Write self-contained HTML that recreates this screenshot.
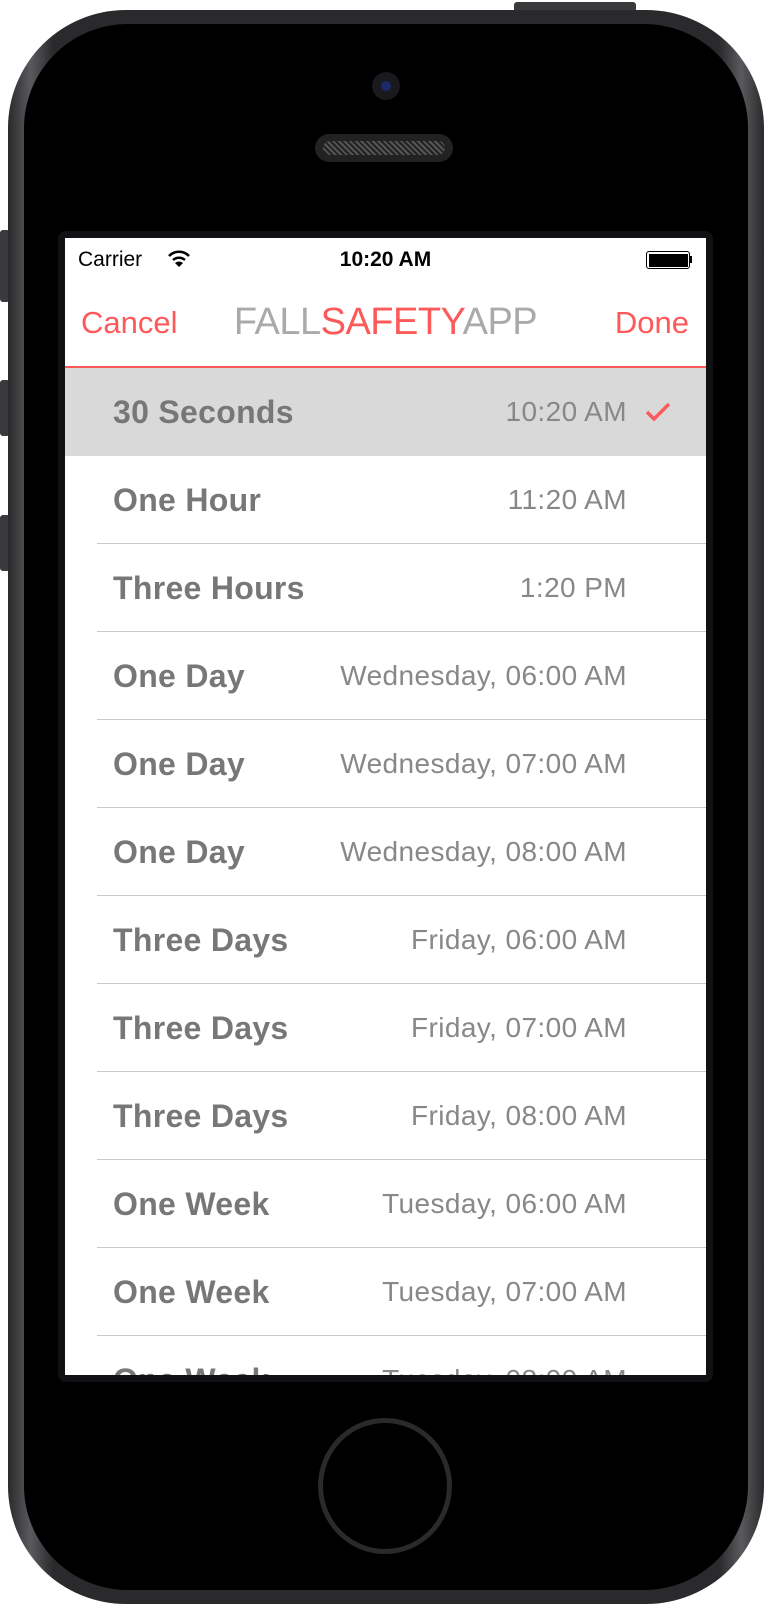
<!DOCTYPE html>
<html><head><style>
html,body{margin:0;padding:0;background:#fff;width:764px;height:1604px;overflow:hidden}
body{position:relative;font-family:"Liberation Sans",sans-serif}
.phone{position:absolute;left:8px;top:10px;width:756px;height:1594px;border-radius:118px;background:linear-gradient(90deg,#2a2a2c,#5a5a5e 3%,#2a2a2c 6%,#2a2a2c 94%,#5a5a5e 97%,#2a2a2c);}
.inner{position:absolute;left:16px;top:14px;right:16px;bottom:14px;border-radius:104px;background:#000}
.btn{position:absolute;background:#3a3a3c;border-radius:3px}
.screen{position:absolute;left:65px;top:238px;width:641px;height:1137px;background:#fff;overflow:hidden}
.frame{position:absolute;left:58px;top:231px;width:655px;height:1151px;background:#111114;border-radius:8px}
.sb{position:absolute;top:0;left:0;right:0;height:40px;font-size:21px;color:#000}
.nav{position:absolute;top:40px;left:0;right:0;height:88px;border-bottom:2px solid #fc5a5a}
.row{position:absolute;left:0;right:0;height:88px}
.row .l{position:absolute;left:48px;top:0;line-height:88px;font-size:32px;font-weight:bold;color:#777;letter-spacing:0.3px}
.row .r{position:absolute;right:79px;top:0;line-height:88px;font-size:28px;color:#888;letter-spacing:0.4px}
.row .sep{position:absolute;left:32px;right:0;bottom:0;height:1px;background:#c8c8c8}
</style></head><body>
<div class="btn" style="left:0;top:230px;width:10px;height:72px"></div>
<div class="btn" style="left:0;top:380px;width:10px;height:56px"></div>
<div class="btn" style="left:0;top:515px;width:10px;height:56px"></div>
<div class="btn" style="left:514px;top:2px;width:122px;height:12px"></div>
<div class="phone"><div class="inner"></div></div>
<div style="position:absolute;left:372px;top:72px;width:28px;height:28px;border-radius:50%;background:#1a1a1e"><div style="position:absolute;left:9px;top:9px;width:10px;height:10px;border-radius:50%;background:#1a2a6a"></div></div>
<div style="position:absolute;left:315px;top:134px;width:138px;height:28px;border-radius:14px;background:#222;"><div style="position:absolute;left:8px;top:7px;right:8px;bottom:7px;border-radius:7px;background:repeating-linear-gradient(45deg,#555 0 2px,#222 2px 4px)"></div></div>
<div style="position:absolute;left:318px;top:1418px;width:134px;height:136px;border-radius:50%;border:5px solid #2a2a2c;box-sizing:border-box"></div>
<div class="frame"></div>
<div class="screen">
 <div class="sb">
  <span style="position:absolute;left:13px;top:10px">Carrier</span>
  <svg style="position:absolute;left:103px;top:12px" width="22" height="18" viewBox="0 0 22 18"><path d="M1 6 A14 14 0 0 1 21 6" stroke="#000" stroke-width="2.5" fill="none"/><path d="M5 10 A9 9 0 0 1 17 10" stroke="#000" stroke-width="2.5" fill="none"/><path d="M11 17 L7 13 A6 6 0 0 1 15 13 Z" fill="#000"/></svg>
  <span style="position:absolute;left:0;right:0;text-align:center;top:10px;font-weight:bold">10:20 AM</span>
  <div style="position:absolute;left:581px;top:13px;width:44px;height:18px;border:1.5px solid #000;border-radius:3px;box-sizing:border-box;padding:1.5px"><div style="background:#000;width:100%;height:100%"></div></div>
  <div style="position:absolute;left:625px;top:18px;width:2px;height:7px;background:#000"></div>
 </div>
 <div class="nav">
  <span style="position:absolute;left:16px;top:27px;font-size:31px;color:#fc5a5a">Cancel</span>
  <span style="position:absolute;left:0;right:0;text-align:center;top:23px;font-size:38px;color:#aaa;letter-spacing:-0.5px">FALL<span style="color:#fc5a5a">SAFETY</span>APP</span>
  <span style="position:absolute;right:17px;top:27px;font-size:31px;color:#fc5a5a">Done</span>
 </div>
 <div class="row" style="top:130px;background:#d9d9d9"><span class="l">30 Seconds</span><span class="r">10:20 AM</span>
  <svg style="position:absolute;left:580px;top:34px" width="26" height="20" viewBox="0 0 26 20"><path d="M2 10 L9 17 L24 2" stroke="#fc5a5a" stroke-width="3.5" fill="none"/></svg></div>
 <div class="row" style="top:218px"><span class="l">One Hour</span><span class="r">11:20 AM</span><div class="sep"></div></div>
 <div class="row" style="top:306px"><span class="l">Three Hours</span><span class="r">1:20 PM</span><div class="sep"></div></div>
 <div class="row" style="top:394px"><span class="l">One Day</span><span class="r">Wednesday, 06:00 AM</span><div class="sep"></div></div>
 <div class="row" style="top:482px"><span class="l">One Day</span><span class="r">Wednesday, 07:00 AM</span><div class="sep"></div></div>
 <div class="row" style="top:570px"><span class="l">One Day</span><span class="r">Wednesday, 08:00 AM</span><div class="sep"></div></div>
 <div class="row" style="top:658px"><span class="l">Three Days</span><span class="r">Friday, 06:00 AM</span><div class="sep"></div></div>
 <div class="row" style="top:746px"><span class="l">Three Days</span><span class="r">Friday, 07:00 AM</span><div class="sep"></div></div>
 <div class="row" style="top:834px"><span class="l">Three Days</span><span class="r">Friday, 08:00 AM</span><div class="sep"></div></div>
 <div class="row" style="top:922px"><span class="l">One Week</span><span class="r">Tuesday, 06:00 AM</span><div class="sep"></div></div>
 <div class="row" style="top:1010px"><span class="l">One Week</span><span class="r">Tuesday, 07:00 AM</span><div class="sep"></div></div>
 <div class="row" style="top:1098px"><span class="l">One Week</span><span class="r">Tuesday, 08:00 AM</span><div class="sep"></div></div>
</div>
</body></html>
